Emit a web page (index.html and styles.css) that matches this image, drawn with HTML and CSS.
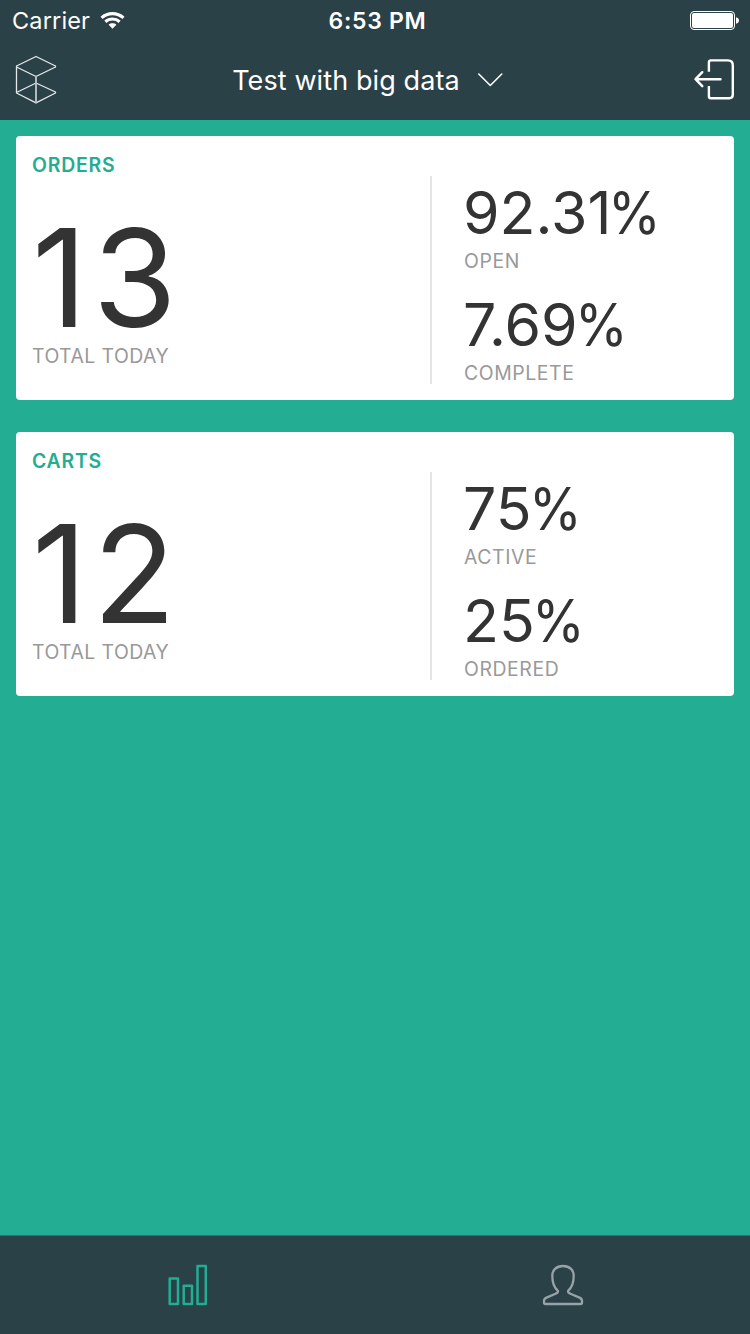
FILE: index.html
```html
<!DOCTYPE html>
<html lang="en">
<head>
<meta charset="utf-8">
<title>Dashboard</title>
<link rel="stylesheet" href="styles.css">
</head>
<body>
<div class="app">
  <header class="header">
    <div class="status">
      <div class="status-left">
        <span class="carrier">Carrier</span>
        <svg class="wifi" width="25" height="19" viewBox="0 0 26 19" fill="none" stroke="#fff" stroke-width="3.2">
          <path d="M1.6 6.7C8 .9 18 .9 24.4 6.7"/>
          <path d="M5.6 10.8C9.8 7 16.2 7 20.4 10.8"/>
          <path d="M13 18L9 13.9C11 11.9 15 11.9 17 13.9Z" fill="#fff" stroke="none"/>
        </svg>
      </div>
      <span class="time">6:53 PM</span>
      <div class="status-right">
        <svg width="50" height="20" viewBox="0 0 50 20">
          <rect x=".5" y=".5" width="44" height="18" rx="3.5" fill="none" stroke="#fff"/>
          <rect x="2" y="2" width="41" height="15" rx="2" fill="#fff"/>
          <path d="M46 6.2C50 7 50 12 46 12.8Z" fill="#fff"/>
        </svg>
      </div>
    </div>
    <nav class="navbar">
      <svg class="logo" width="42" height="50" viewBox="0 0 42 50" fill="none" stroke="#e6e9ea" stroke-width="1.3" stroke-linejoin="round" stroke-linecap="round">
        <path d="M40.5 12V11L21 1.5 1.5 11V38L21 47.8 40.5 38V37L21 28 1.5 37.5M1.5 12L21 21.5 40.5 12"/>
        <path d="M21 21.5V47.5" stroke-width="1.9" stroke="#b9c1c4"/>
      </svg>
      <div class="project">
        <span class="project-name">Test with big data</span>
        <svg width="26" height="16" viewBox="0 0 26 16" fill="none" stroke="#fff" stroke-width="1.6" stroke-linecap="round" stroke-linejoin="round"><path d="M1.8 2L13.3 13.5 24.8 2"/></svg>
      </div>
      <svg class="logout" width="42" height="42" viewBox="0 0 42 42" fill="none" stroke="#fff" stroke-width="2.4" stroke-linecap="round" stroke-linejoin="round">
        <path d="M15.9 13.8V4.4Q15.9 2.4 17.9 2.4H35Q39.8 2.4 39.8 7.4V36.6Q39.8 40.3 36.3 40.3H17.9Q15.9 40.3 15.9 38.3V28" stroke-linecap="butt"/>
        <path d="M27.5 21.2H2.7M9.3 14.2L2.5 21.2 9.3 28.2"/>
      </svg>
    </nav>
  </header>
  <main class="main">
    <section class="card">
      <div class="summary">
        <h2 class="card-title">ORDERS</h2>
        <div class="total">13</div>
        <div class="label label-total">TOTAL TODAY</div>
      </div>
      <div class="breakdown">
        <div class="stat"><div class="percent">92.31<span class="sign">%</span></div><div class="label">OPEN</div></div>
        <div class="stat"><div class="percent">7.69<span class="sign">%</span></div><div class="label">COMPLETE</div></div>
      </div>
    </section>
    <section class="card">
      <div class="summary">
        <h2 class="card-title">CARTS</h2>
        <div class="total">12</div>
        <div class="label label-total">TOTAL TODAY</div>
      </div>
      <div class="breakdown">
        <div class="stat"><div class="percent">75<span class="sign">%</span></div><div class="label">ACTIVE</div></div>
        <div class="stat"><div class="percent">25<span class="sign">%</span></div><div class="label">ORDERED</div></div>
      </div>
    </section>
  </main>
  <footer class="tabs">
    <div class="tab">
      <svg width="42" height="42" viewBox="0 0 42 42" fill="none" stroke="#23ad92" stroke-width="2.5" stroke-linejoin="round">
        <path d="M2.7 14.5H11V40H2.7ZM16.7 21.8H25V40H16.7ZM30.5 2H38.8V40H30.5Z"/>
      </svg>
    </div>
    <div class="tab">
      <svg width="42" height="42" viewBox="0 0 42 42" fill="none" stroke="#98a3a7" stroke-width="2.3" stroke-linejoin="round">
        <path d="M21 2C14 2 10.3 6.5 10.3 11.8C10.3 17 11.5 23 15.7 26.6C16.5 28.2 15 29.2 13 30L4.5 33.6Q2 34.7 2 37V38.5Q2 40 3.5 40H38.5Q40 40 40 38.5V37Q40 34.7 37.5 33.6L29 30C27 29.2 25.5 28.2 26.3 26.6C30.5 23 31.7 17 31.7 11.8C31.7 6.5 28 2 21 2Z"/>
      </svg>
    </div>
  </footer>
</div>
</body>
</html>
```
FILE: styles.css
```css
* { box-sizing: border-box; }
body {
  margin: 0;
  font-family: Inter, "Liberation Sans", sans-serif;
  background: #23ad92;
}
.app {
  width: 750px;
  height: 1334px;
  display: flex;
  flex-direction: column;
}
.header {
  height: 120px;
  background: #2b4148;
  color: #fff;
}
.status {
  height: 40px;
  display: grid;
  grid-template-columns: 1fr auto 1fr;
  grid-template-rows: 40px;
  align-items: center;
}
.status-left {
  display: flex;
  align-items: center;
  gap: 10px;
  padding-left: 12px;
}
.carrier { font-size: 23.5px; line-height: 38px; letter-spacing: 0.15px; padding-top: 2px; }
.time { font-size: 23px; line-height: 38px; font-weight: 600; letter-spacing: 0.7px; padding: 2px 0 0 5px; }
.status-right {
  display: flex;
  justify-content: flex-end;
  padding: 2px 10px 0 0;
}
.navbar {
  height: 80px;
  display: grid;
  grid-template-columns: 1fr auto 1fr;
  align-items: center;
  padding: 0 15px;
}
.logout { justify-self: end; margin-bottom: 2px; }
.project {
  display: flex;
  align-items: center;
  gap: 17px;
  padding-right: 15px;
}
.project-name { font-size: 27px; line-height: 40px; letter-spacing: 0.1px; padding-top: 2px; }
.main {
  flex: 1;
  padding: 16px;
  display: flex;
  flex-direction: column;
  gap: 32px;
}
.card {
  height: 264px;
  display: flex;
  background: #fff;
  border-radius: 4px;
}
.summary {
  width: 414px;
  padding: 17px 16px 0;
}
.card-title {
  margin: 0;
  font-size: 19.4px;
  line-height: 24px;
  font-weight: 600;
  letter-spacing: 0.8px;
  color: #23ad92;
}
.total {
  margin-top: 34px;
  font-size: 136px;
  line-height: 134px;
  letter-spacing: 5.5px;
  color: #333;
}
.label {
  font-size: 19.4px;
  line-height: 24px;
  letter-spacing: 0.6px;
  color: #999;
}
.label-total { margin-top: -1px; letter-spacing: 0.45px; }
.breakdown {
  flex: 1;
  display: flex;
  flex-direction: column;
  gap: 20px;
  margin: 40px 0 16px;
  padding: 4px 0 0 32px;
  border-left: 2px solid #e5e5e5;
}
.stat { height: 92px; }
.percent {
  margin: 0 0 4px -1px;
  font-size: 59px;
  line-height: 65px;
  color: #333;
}
.sign {
  display: inline-block;
  margin-left: -3px;
  transform: scaleX(0.91);
  transform-origin: left;
}
.tabs {
  height: 99px;
  display: flex;
  background: #2b4148;
  border-top: 1px solid #287869;
}
.tab {
  flex: 1;
  display: flex;
  align-items: center;
  justify-content: center;
}
```
